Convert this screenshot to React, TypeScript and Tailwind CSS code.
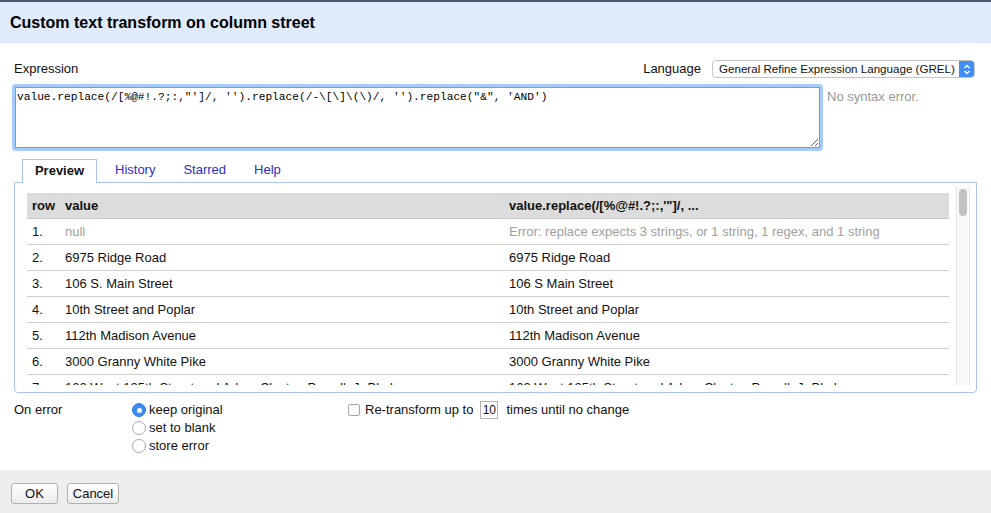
import React from "react";

const EXPR = `value.replace(/[%@#!.?;:,"']/, '').replace(/-\\[\\]\\(\\)/, '').replace("&", 'AND')`;

const ROWS: { n: string; value: string; result: string; muted?: boolean }[] = [
  { n: "1.", value: "null", result: "Error: replace expects 3 strings, or 1 string, 1 regex, and 1 string", muted: true },
  { n: "2.", value: "6975 Ridge Road", result: "6975 Ridge Road" },
  { n: "3.", value: "106 S. Main Street", result: "106 S Main Street" },
  { n: "4.", value: "10th Street and Poplar", result: "10th Street and Poplar" },
  { n: "5.", value: "112th Madison Avenue", result: "112th Madison Avenue" },
  { n: "6.", value: "3000 Granny White Pike", result: "3000 Granny White Pike" },
  { n: "7.", value: "162 West 125th Street and Adam Clayton Powell, Jr Blvd", result: "162 West 125th Street and Adam Clayton Powell, Jr Blvd" },
];

function Radio({ checked, label }: { checked?: boolean; label: string }) {
  return (
    <div className="flex items-center h-[18px]">
      {checked ? (
        <span className="w-[14px] h-[14px] rounded-full bg-[#3b8ef0] border border-[#2f7be0] flex items-center justify-center">
          <span className="w-[5px] h-[5px] rounded-full bg-white" />
        </span>
      ) : (
        <span className="w-[14px] h-[14px] rounded-full bg-white border border-[#a9a9a9]" />
      )}
      <span className="ml-[3px]">{label}</span>
    </div>
  );
}

export default function App() {
  return (
    <div className="w-[991px] h-[513px] overflow-hidden bg-white flex flex-col text-[13px] text-[#111] font-['Liberation_Sans',Arial,sans-serif]">
      {/* Title bar */}
      <div className="border-t-2 border-[#4a5b70] bg-[#dfeafb] h-[43px] shrink-0 flex items-center px-[10px]">
        <h1 className="text-[16px] font-bold text-black">Custom text transform on column street</h1>
      </div>

      {/* Body */}
      <div className="flex-1 px-[12px]">
        <div className="mt-[17px] flex items-center justify-between h-[18px] pr-[4px]">
          <span className="pl-[2px]">Expression</span>
          <div className="flex items-center">
            <span>Language</span>
            <div className="ml-[11px] w-[263px] h-[18px] flex items-stretch rounded-[4px] border border-[#c4c4c4] bg-white overflow-hidden">
              <span className="flex-1 pl-[6px] text-[11.6px] leading-[16px] whitespace-nowrap overflow-hidden">General Refine Expression Language (GREL)</span>
              <span className="w-[15px] bg-[#3f8ef2] flex items-center justify-center">
                <svg width="8" height="11" viewBox="0 0 8 11" fill="none" stroke="white" strokeWidth="1.4">
                  <path d="M1.5 4 L4 1.5 L6.5 4" />
                  <path d="M1.5 7 L4 9.5 L6.5 7" />
                </svg>
              </span>
            </div>
          </div>
        </div>

        <div className="mt-[6px] flex items-start">
          <div className="w-[811px] h-[67px] rounded-[4px] bg-[#a3cdf8] p-[3px] shrink-0">
            <textarea
              readOnly
              value={EXPR}
              className="w-full h-full block border border-[#7d9bc0] bg-white pl-[1px] pt-[3px] text-[11.2px] leading-[13px] text-black outline-none font-['Liberation_Mono','Courier_New',monospace]"
            />
          </div>
          <span className="ml-[4px] mt-[3px] text-[#999] whitespace-nowrap">No syntax error.</span>
        </div>

        {/* Tabs */}
        <div className="mt-[8px] flex items-end pl-[10px] h-[23px]">
          <div className="w-[75px] h-[24px] -mb-[1px] pb-[2px] relative z-10 border border-b-0 border-[#aac3ef] bg-white flex items-center justify-center font-bold">
            Preview
          </div>
          <div className="w-[4px]" />
          <div className="px-[14px] h-[23px] pb-[2px] flex items-center text-[#2d2dc8]">History</div>
          <div className="px-[14px] h-[23px] pb-[2px] flex items-center text-[#2d2dc8]">Starred</div>
          <div className="px-[14px] h-[23px] pb-[2px] flex items-center text-[#2d2dc8]">Help</div>
        </div>

        <div className="ml-[2px] w-[963px] border border-[#aac3ef] rounded-b-[4px] pt-[3px] pb-[6px] pl-[12px] pr-[6px]">
          <div className="flex h-[200px]">
            <div className="w-[922px] h-[199px] overflow-hidden pt-[7px]">
              <div className="grid grid-cols-[33px_444px_1fr] bg-[#dcdcdc] h-[26px] border-b border-[#c9c9c9] font-bold items-center">
                <span className="pl-[5px]">row</span>
                <span className="pl-[5px]">value</span>
                <span className="pl-[5px]">value.replace(/[%@#!.?;:,'"]/, ...</span>
              </div>
              {ROWS.map((r) => (
                <div key={r.n} className="grid grid-cols-[33px_444px_1fr] h-[26px] border-b border-[#cfcfcf] items-center">
                  <span className="pl-[5px]">{r.n}</span>
                  <span className={r.muted ? "pl-[5px] text-[#a0a0a0]" : "pl-[5px]"}>{r.value}</span>
                  <span className={r.muted ? "pl-[5px] text-[#a0a0a0]" : "pl-[5px]"}>{r.result}</span>
                </div>
              ))}
            </div>
            <div className="ml-[7px] w-[14px] h-full border-l border-r border-[#e6e6e6] bg-[#fafafa] pt-[3px] flex justify-center">
              <div className="w-[8px] h-[27px] rounded-full bg-[#c2c2c2]" />
            </div>
          </div>
        </div>

        {/* Options */}
        <div className="mt-[8px] flex items-start">
          <span className="w-[120px] pl-[2px] h-[18px] leading-[18px]">On error</span>
          <div className="w-[216px] flex flex-col">
            <Radio checked label="keep original" />
            <Radio label="set to blank" />
            <Radio label="store error" />
          </div>
          <div className="flex items-center h-[18px]">
            <span className="w-[12px] h-[12px] rounded-[2px] border border-[#a6a6a6] bg-white" />
            <span className="ml-[5px]">Re-transform up to</span>
            <span className="ml-[7px] w-[18px] h-[18px] border border-[#b5b5b5] flex items-center justify-center text-[12px]">10</span>
            <span className="ml-[8px]">times until no change</span>
          </div>
        </div>
      </div>

      {/* Footer */}
      <div className="h-[43px] shrink-0 bg-[#eeeeee] flex items-start pt-[13px] pl-[11px] gap-[9px]">
        <button className="w-[47px] h-[21px] rounded-[3px] border border-[#b0b0b0] bg-gradient-to-b from-white to-[#ececec] text-[13px]">OK</button>
        <button className="w-[52px] h-[21px] rounded-[3px] border border-[#b0b0b0] bg-gradient-to-b from-white to-[#ececec] text-[13px]">Cancel</button>
      </div>
    </div>
  );
}
